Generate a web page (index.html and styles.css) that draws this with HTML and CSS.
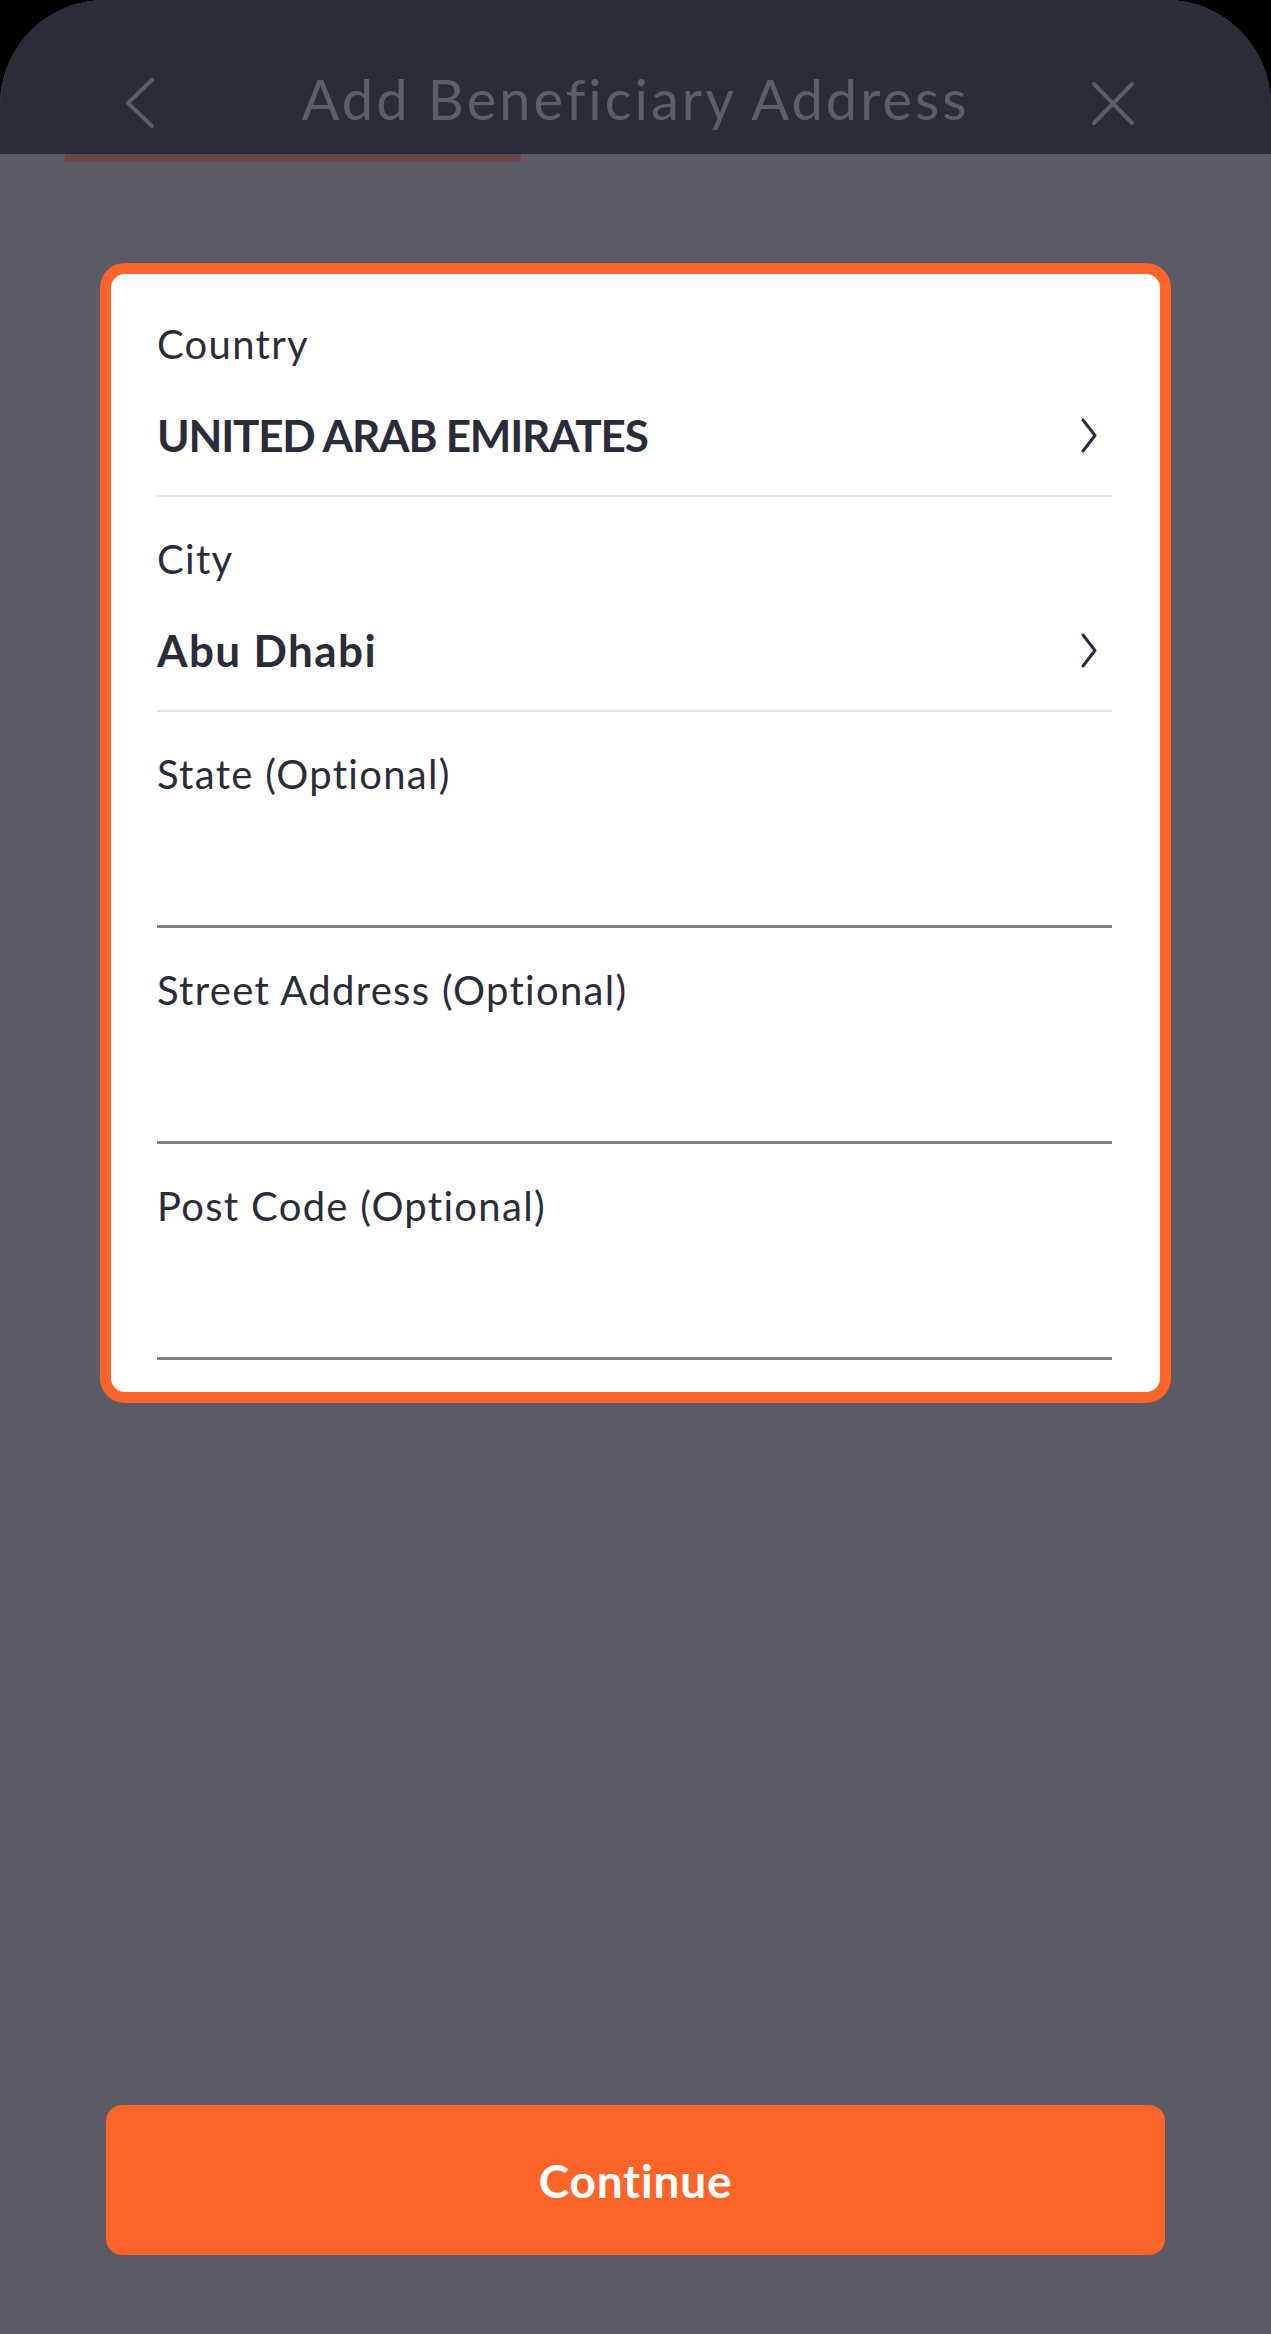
FILE: index.html
```html
<!DOCTYPE html>
<html lang="en">
<head>
  <meta charset="UTF-8">
  <meta name="viewport" content="width=device-width, initial-scale=1.0">
  <title>Add Beneficiary Address</title>
  <link rel="stylesheet" href="styles.css">
</head>
<body>
  <div class="screen">
    <div class="topbar">
      <svg class="nav-icon back" width="70" height="60" viewBox="0 0 70 60">
        <polyline points="42,11 18,34 42,57" />
      </svg>
      <h1>Add Beneficiary Address</h1>
      <svg class="nav-icon close" width="70" height="60" viewBox="0 0 70 60">
        <line x1="3" y1="15" x2="41" y2="54" />
        <line x1="41" y1="15" x2="3" y2="54" />
      </svg>
    </div>
    <div class="progress"></div>

    <div class="content">
      <div class="card">
        <div class="field select">
          <div class="label">Country</div>
          <div class="value">
            <span class="caps">UNITED ARAB EMIRATES</span>
            <svg class="chev" width="16" height="35" viewBox="0 0 16 35"><polyline points="2,2 14,17.5 2,33" /></svg>
          </div>
        </div>
        <div class="field select">
          <div class="label">City</div>
          <div class="value">
            <span>Abu Dhabi</span>
            <svg class="chev" width="16" height="35" viewBox="0 0 16 35"><polyline points="2,2 14,17.5 2,33" /></svg>
          </div>
        </div>
        <div class="field input">
          <div class="label">State (Optional)</div>
          <div class="value"></div>
        </div>
        <div class="field input">
          <div class="label">Street Address (Optional)</div>
          <div class="value"></div>
        </div>
        <div class="field input">
          <div class="label">Post Code (Optional)</div>
          <div class="value"></div>
        </div>
      </div>
    </div>

    <div class="footer">
      <button class="btn">Continue</button>
    </div>
  </div>
</body>
</html>
```

FILE: styles.css
```css
body { margin: 0; background: #000; font-family: "Lato", "Open Sans", sans-serif; color: #2b2c3a; }
.screen { width: 1271px; height: 2334px; background: #5b5b66; border-radius: 105px 105px 0 0; overflow: hidden; display: flex; flex-direction: column; }

.topbar { height: 154px; box-sizing: border-box; background: #2b2c3a; display: grid; grid-template-columns: 1fr auto 1fr; align-items: center; padding: 65px 110px 21px; }
.topbar h1 { margin: 0; font-size: 56px; line-height: 68px; font-weight: 400; letter-spacing: 3px; color: #5d5e6b; text-align: center; }
.nav-icon { fill: none; stroke: #5d5e6b; stroke-width: 4; stroke-linecap: round; stroke-linejoin: round; }
.nav-icon.close { justify-self: end; }
.progress { height: 8px; width: 456px; margin-left: 65px; background: #6b4548; }

.content { flex: 1; padding: 101px 100px 0; }
.card { background: #fff; border: 11px solid #fc6429; border-radius: 25px; padding: 8px 48px 32px 46px; }
.field { padding-top: 38px; border-bottom: 2px solid #e1e1e4; }
.field.input { border-bottom: 3px solid #7f7f88; }
.label { font-size: 40px; line-height: 48px; letter-spacing: 1.3px; }
.value { display: flex; align-items: center; justify-content: space-between; min-height: 53px; margin-top: 41px; padding-bottom: 33px; padding-right: 15px; font-size: 44px; line-height: 53px; font-weight: 700; letter-spacing: 1.4px; }
.value .caps { letter-spacing: -1.2px; }
.chev { fill: none; stroke: #2b2c3a; stroke-width: 3; stroke-linecap: round; stroke-linejoin: round; }

.footer { padding: 52px 106px 79px; }
.btn { display: block; width: 100%; height: 150px; border: 0; border-radius: 16px; background: #fc6429; color: #fff; font-family: "Lato", sans-serif; font-size: 46px; font-weight: 700; letter-spacing: 0.8px; }
```
